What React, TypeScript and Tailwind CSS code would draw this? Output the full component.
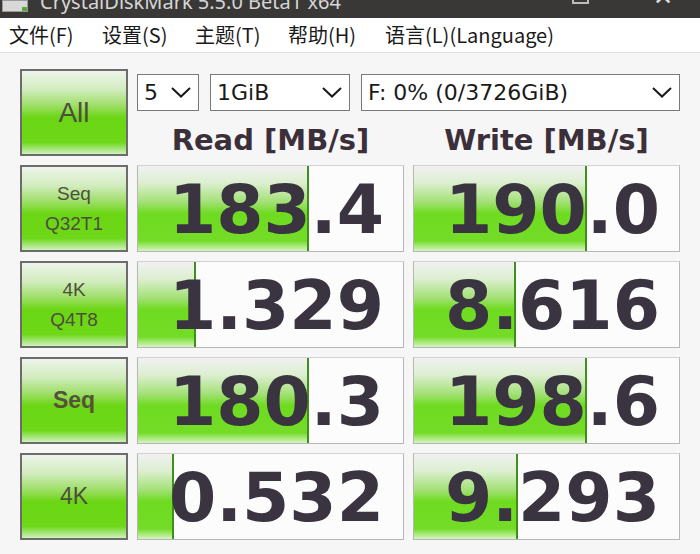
import React from 'react';

const btnBg =
  'bg-[linear-gradient(to_bottom,#eef4ea_0%,#d2ecc0_22%,#97dd5c_44%,#6bd614_56%,#6ed818_86%,#a6e67c_94%,#cdf0b8_100%)]';
const barBg =
  'bg-[linear-gradient(to_bottom,#f1f1f1_0%,#dcefd0_20%,#a4e178_42%,#6edb20_56%,#74dc28_88%,#b6ec8e_96%,#d6f4c4_100%)]';

type Row = {
  label: React.ReactNode;
  read: string;
  readW: string;
  write: string;
  writeW: string;
};

const rows: Row[] = [
  {
    label: (
      <div className="flex flex-col items-center leading-[30px] text-[19px]">
        <span>Seq</span>
        <span>Q32T1</span>
      </div>
    ),
    read: '183.4',
    readW: 'w-[171px]',
    write: '190.0',
    writeW: 'w-[173px]',
  },
  {
    label: (
      <div className="flex flex-col items-center leading-[30px] text-[19px]">
        <span>4K</span>
        <span>Q4T8</span>
      </div>
    ),
    read: '1.329',
    readW: 'w-[58px]',
    write: '8.616',
    writeW: 'w-[102px]',
  },
  {
    label: <span className="text-[23px] font-bold text-[#55503a]">Seq</span>,
    read: '180.3',
    readW: 'w-[171px]',
    write: '198.6',
    writeW: 'w-[173px]',
  },
  {
    label: <span className="text-[23px]">4K</span>,
    read: '0.532',
    readW: 'w-[36px]',
    write: '9.293',
    writeW: 'w-[104px]',
  },
];

function Chevron() {
  return (
    <svg width="20" height="11" viewBox="0 0 20 11" className="shrink-0">
      <polyline points="1,1 10,9.5 19,1" fill="none" stroke="#1a1a1a" strokeWidth="2" />
    </svg>
  );
}

function Select({ value, w }: { value: string; w: string }) {
  return (
    <div
      className={`${w} h-[37px] flex items-center justify-between pl-[6px] pr-[7px] bg-white border border-[#7a7a7a] text-[22px] text-[#1a1a1a]`}
      style={{ fontFamily: '"DejaVu Sans", sans-serif' }}
    >
      <span className="leading-none">{value}</span>
      <Chevron />
    </div>
  );
}

function Result({ value, barW }: { value: string; barW: string }) {
  return (
    <div className="relative w-[267px] h-[87px] bg-[#fcfcfc] border border-[#b6b6b6] border-t-[#d2d2d2] overflow-hidden flex items-center justify-end pr-[19px]">
      <div className={`absolute left-0 top-0 bottom-0 ${barW} ${barBg} border-r-2 border-[#3f8f1c]`} />
      <span
        className="relative mt-[3px] text-[68px] font-bold leading-none text-[#3a3440]"
        style={{ fontFamily: '"DejaVu Sans", sans-serif' }}
      >
        {value}
      </span>
    </div>
  );
}

function TestButton({ children }: { children: React.ReactNode }) {
  return (
    <div
      className={`w-[108px] h-[87px] ${btnBg} border-2 border-[#6c6c6c] flex items-center justify-center text-[#4e4e3c]`}
      style={{ fontFamily: '"Liberation Sans", sans-serif' }}
    >
      {children}
    </div>
  );
}

export default function App() {
  const menu = ['文件(F)', '设置(S)', '主题(T)', '帮助(H)', '语言(L)(Language)'];

  return (
    <div className="w-[700px] h-[554px] bg-[#f6f6f6] overflow-hidden">
      {/* title bar (cut off at top) */}
      <div className="h-[18px] bg-[#3a3836] overflow-hidden flex items-start">
        <div className="w-[26px] h-[12px] ml-[2px] bg-[#d8d8d8] border border-[#9a9a9a] flex items-end justify-end">
          <div className="w-[5px] h-[4px] bg-[#5aa83a]" />
        </div>
        <span
          className="ml-[12px] -mt-[8px] text-[20px] leading-[20px] text-[#d6d6d6]"
          style={{ fontFamily: '"Noto Sans", sans-serif' }}
        >
          CrystalDiskMark 5.5.0 Beta1 x64
        </span>
        <div className="ml-auto flex items-start">
          <div className="w-[17px] h-[16px] -mt-[12px] border-2 border-[#bdbdbd]" />
          <span className="ml-[64px] mr-[27px] -mt-[14px] text-[24px] leading-[20px] text-[#e0e0e0]">✕</span>
        </div>
      </div>

      {/* menu bar */}
      <div
        className="h-[35px] bg-white border-b border-[#dedede] flex items-center pl-[9px] text-[20px] text-[#1a1a1a]"
        style={{ fontFamily: '"Noto Sans CJK SC", sans-serif' }}
      >
        <span className="w-[93px] leading-none">{menu[0]}</span>
        <span className="w-[93px] leading-none">{menu[1]}</span>
        <span className="w-[93px] leading-none">{menu[2]}</span>
        <span className="w-[97px] leading-none">{menu[3]}</span>
        <span className="leading-none">{menu[4]}</span>
      </div>

      {/* main panel */}
      <div className="pl-[20px] pt-[16px] flex flex-col gap-[9px]">
        <div className="flex gap-[9px]">
          <TestButton>
            <span className="text-[28px]">All</span>
          </TestButton>
          <div className="flex flex-col">
            <div className="flex gap-[11px] mt-[5px]">
              <Select value="5" w="w-[62px]" />
              <Select value="1GiB" w="w-[140px]" />
              <Select value="F: 0% (0/3726GiB)" w="w-[319px]" />
            </div>
            <div
              className="flex gap-[9px] mt-[15px] text-[29px] font-bold leading-none text-[#3b2f3a]"
              style={{ fontFamily: '"DejaVu Sans", sans-serif' }}
            >
              <div className="w-[267px] text-center">Read [MB/s]</div>
              <div className="w-[267px] text-center">Write [MB/s]</div>
            </div>
          </div>
        </div>

        {rows.map((r, i) => (
          <div key={i} className="flex gap-[9px]">
            <TestButton>{r.label}</TestButton>
            <Result value={r.read} barW={r.readW} />
            <Result value={r.write} barW={r.writeW} />
          </div>
        ))}
      </div>
    </div>
  );
}
